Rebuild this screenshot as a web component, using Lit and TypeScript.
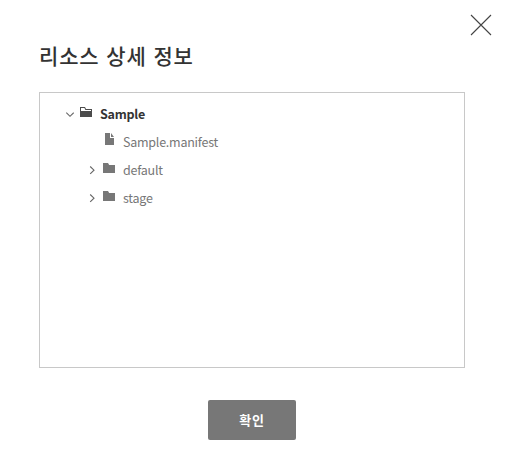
import { LitElement, html, css, svg } from "lit";
import { customElement, property } from "lit/decorators.js";
import { classMap } from "lit/directives/class-map.js";

type Kind = "open" | "file" | "folder";

interface Entry {
  label: string;
  kind: Kind;
  depth: number;
}

const entries: Entry[] = [
  { label: "Sample", kind: "open", depth: 0 },
  { label: "Sample.manifest", kind: "file", depth: 1 },
  { label: "default", kind: "folder", depth: 1 },
  { label: "stage", kind: "folder", depth: 1 },
];

const icons = {
  open: svg`<path fill-rule="evenodd" d="M0 0H5L6 2H12V10H0ZM1 1V4H11V3H5.4L4.4 1Z"/>`,
  folder: svg`<path d="M0 0H5L6.2 2H12V10H0Z"/>`,
  file: svg`<path d="M2 0H7V5H11V12H2ZM8 0L11 4H8Z"/>`,
};

@customElement("tree-row")
class TreeRow extends LitElement {
  @property({ attribute: false }) entry!: Entry;

  static styles = css`
    :host { display: block; height: 28px; }
    .row { display: flex; align-items: center; height: 28px; padding-left: 26px; color: #777; }
    .nested { padding-left: 49px; }
    .open { color: #333; font-weight: 700; }
    .arrow { flex: none; width: 9px; height: 9px; margin: 0 6px 0 -1px; fill: none; stroke: #666; stroke-width: 1.1; }
    .icon { flex: none; width: 12px; height: 12px; margin: 0 8px 4px 0; fill: #777; }
    .file .icon { margin-bottom: 6px; }
    .open .icon { fill: #4c4c4c; }
    .hidden { visibility: hidden; }
    .label { font-size: 12.5px; letter-spacing: -0.24px; }
  `;

  render() {
    const { kind, depth, label } = this.entry;
    return html`<div class=${classMap({ row: true, nested: depth > 0, open: kind === "open", file: kind === "file" })}>
      <svg class=${classMap({ arrow: true, hidden: kind === "file" })} viewBox="0 0 9 9">
        <path d=${kind === "open" ? "M1.3 2.7L5 6.3L8.7 2.7" : "M2.2 .5L6 4.2L2.2 7.9"} />
      </svg>
      <svg class="icon" viewBox=${kind === "file" ? "0 0 12 12" : "0 -1 12 12"}>${icons[kind]}</svg>
      <span class="label">${label}</span>
    </div>`;
  }
}

@customElement("app-root")
class AppRoot extends LitElement {
  static styles = css`
    :host {
      display: block;
      box-sizing: border-box;
      width: 505px;
      height: 472px;
      background: #fff;
      font-family: "Noto Sans CJK KR", sans-serif;
      font-size: 13px;
      line-height: 28px;
    }
    .dialog { display: flex; flex-direction: column; height: 472px; }
    .top { display: flex; justify-content: flex-end; padding: 14px 13px 0 0; height: 26px; }
    .close { width: 22px; height: 22px; padding: 0; border: 0; background: none; }
    .close svg { display: block; stroke: #444; stroke-width: 1.1; }
    .title { margin: 0 39px; height: 52px; font-size: 21px; font-weight: 500; line-height: 31px; letter-spacing: 0.85px; word-spacing: 1.2px; color: #333; }
    .tree { box-sizing: border-box; width: 426px; height: 276px; margin-left: 39px; padding-top: 7px; border: 1px solid #c8c8c8; }
    .actions { display: flex; width: 504px; justify-content: center; padding-top: 32px; }
    .confirm {
      width: 88px;
      height: 40px;
      padding: 0 0 1px;
      border: 0;
      border-radius: 2px;
      background: #777;
      color: #fff;
      font: 700 13px/38px "Noto Sans CJK KR", sans-serif;
      letter-spacing: 0.8px;
    }
  `;

  render() {
    return html`<div class="dialog">
      <div class="top">
        <button class="close" aria-label="닫기">
          <svg width="22" height="22" viewBox="0 0 22 22"><path d="M1 1L21 21M21 1L1 21" /></svg>
        </button>
      </div>
      <h1 class="title">리소스 상세 정보</h1>
      <div class="tree">${entries.map((e) => html`<tree-row .entry=${e}></tree-row>`)}</div>
      <div class="actions"><button class="confirm">확인</button></div>
    </div>`;
  }
}
